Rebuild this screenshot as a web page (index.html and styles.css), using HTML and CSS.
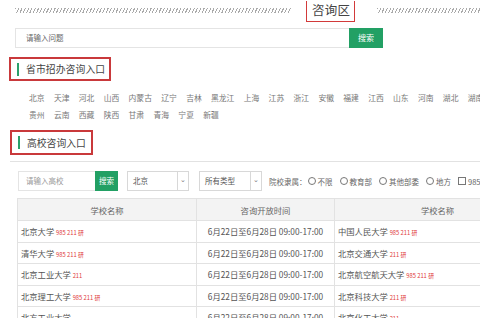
FILE: index.html
```html
<!DOCTYPE html>
<html lang="zh">
<head>
<meta charset="utf-8">
<link rel="stylesheet" href="styles.css">
</head>
<body>
<div class="page">
  <div class="top">
    <div class="hatch hatch-left"></div>
    <div class="title">咨询区</div>
    <div class="hatch hatch-right"></div>
  </div>
  <div class="search">
    <div class="search-input">请输入问题</div>
    <div class="btn">搜索</div>
  </div>

  <div class="sec sec-1"><span class="bar"></span>省市招办咨询入口</div>
  <div class="prov">
    <div class="prov-row"><span>北京</span><span>天津</span><span>河北</span><span>山西</span><span>内蒙古</span><span>辽宁</span><span>吉林</span><span>黑龙江</span><span>上海</span><span>江苏</span><span>浙江</span><span>安徽</span><span>福建</span><span>江西</span><span>山东</span><span>河南</span><span>湖北</span><span>湖南</span></div>
    <div class="prov-row"><span>贵州</span><span>云南</span><span>西藏</span><span>陕西</span><span>甘肃</span><span>青海</span><span>宁夏</span><span>新疆</span></div>
  </div>

  <div class="sec sec-2"><span class="bar"></span>高校咨询入口</div>
  <div class="rule"></div>

  <div class="filter">
    <div class="f-input">请输入高校</div>
    <div class="btn btn-sm">搜索</div>
    <div class="sel sel-1"><span class="sel-text">北京</span><span class="sel-arrow">⌄</span></div>
    <div class="sel sel-2"><span class="sel-text">所有类型</span><span class="sel-arrow">⌄</span></div>
    <div class="belong">院校隶属：</div>
    <div class="opt"><span class="radio"></span>不限</div>
    <div class="opt"><span class="radio"></span>教育部</div>
    <div class="opt"><span class="radio"></span>其他部委</div>
    <div class="opt"><span class="radio"></span>地方</div>
    <div class="opt"><span class="check"></span>985</div>
  </div>

  <table class="tbl">
    <thead>
      <tr><th class="c1">学校名称</th><th class="c2">咨询开放时间</th><th class="c3">学校名称</th></tr>
    </thead>
    <tbody>
      <tr><td>北京大学 <span class="tag">985 211 研</span></td><td class="time">6月22日至6月28日 09:00-17:00</td><td>中国人民大学 <span class="tag">985 211 研</span></td></tr>
      <tr><td>清华大学 <span class="tag">985 211 研</span></td><td class="time">6月22日至6月28日 09:00-17:00</td><td>北京交通大学 <span class="tag">211 研</span></td></tr>
      <tr><td>北京工业大学 <span class="tag">211</span></td><td class="time">6月22日至6月28日 09:00-17:00</td><td>北京航空航天大学 <span class="tag">985 211 研</span></td></tr>
      <tr><td>北京理工大学 <span class="tag">985 211 研</span></td><td class="time">6月22日至6月28日 09:00-17:00</td><td>北京科技大学 <span class="tag">211 研</span></td></tr>
      <tr><td>北方工业大学</td><td class="time">6月22日至6月28日 09:00-17:00</td><td>北京化工大学 <span class="tag">211</span></td></tr>
    </tbody>
  </table>
</div>
</body>
</html>
```

FILE: styles.css
```css
html, body {
  margin: 0;
  padding: 0;
  background: #fff;
  overflow: hidden;
}
body {
  width: 480px;
  height: 318px;
  font-family: "Noto Sans CJK SC", "Noto Sans", sans-serif;
  color: #555;
}
.page {
  width: 480px;
}
.top {
  display: flex;
  align-items: center;
  height: 22px;
}
.hatch {
  height: 5px;
  background: repeating-linear-gradient(115deg, #aaa 0 1px, #fff 1px 3px);
  margin-top: -2px;
}
.hatch-left {
  margin-left: 15px;
  width: 276px;
}
.hatch-right {
  margin-left: 22px;
  flex: 1;
}
.title {
  margin-left: 15px;
  height: 20px;
  border: 1px solid #d23a3a;
  border-top: none;
  padding: 0 4px 0 5px;
  font-size: 12.5px;
  line-height: 18px;
  color: #444;
  letter-spacing: 0.3px;
}
.search {
  display: flex;
  margin: 6px 0 0 15px;
}
.search-input {
  width: 323px;
  height: 18px;
  border: 1px solid #e4e4e4;
  border-right: none;
  padding-left: 10px;
  font-size: 7.5px;
  line-height: 18px;
  color: #666;
}
.btn {
  width: 34px;
  height: 20px;
  background: #22a064;
  color: #fff;
  font-size: 8px;
  line-height: 20px;
  text-align: center;
  flex-shrink: 0;
}
.sec {
  display: flex;
  align-items: center;
  border: 2px solid #c9393b;
  font-size: 9.8px;
  color: #444;
  box-sizing: border-box;
}
.bar {
  width: 2px;
  height: 13px;
  background: #2aa06a;
  margin: 0 7px 0 6px;
}
.sec-1 {
  margin: 9px 0 0 9px;
  width: 102px;
  height: 24px;
  letter-spacing: 0.1px;
}
.prov {
  margin: 8px 0 0 29px;
  font-size: 7.8px;
  color: #777;
}
.prov-row {
  white-space: nowrap;
  height: 17px;
  line-height: 17px;
}
.prov-row span {
  margin-right: 9.3px;
}
.sec-2 {
  margin: 7px 0 0 10px;
  width: 83px;
  height: 25px;
}
.rule {
  margin: 6px 0 0 10px;
  height: 1px;
  background: #e2e2e2;
}
.filter {
  display: flex;
  align-items: center;
  margin: 9px 0 0 18px;
  height: 20px;
  white-space: nowrap;
  font-size: 7.5px;
}
.filter > * {
  flex-shrink: 0;
}
.f-input {
  width: 69px;
  height: 18px;
  border: 1px solid #e4e4e4;
  border-right: none;
  padding-left: 7px;
  line-height: 18px;
  color: #999;
}
.btn-sm {
  width: 23px;
  height: 20px;
  line-height: 20px;
  font-size: 7.5px;
}
.sel {
  display: flex;
  height: 18px;
  border: 1px solid #d8d8d8;
  color: #555;
  line-height: 18px;
}
.sel-1 {
  margin-left: 9px;
  width: 60px;
}
.sel-2 {
  margin-left: 10px;
  width: 61px;
}
.sel-text {
  flex: 1;
  padding-left: 5px;
}
.sel-arrow {
  width: 10px;
  border-left: 1px solid #d8d8d8;
  text-align: center;
  font-size: 7px;
  line-height: 14px;
  color: #777;
}
.belong {
  margin-left: 7px;
  color: #666;
}
.opt {
  display: flex;
  align-items: center;
  margin-left: 1px;
  color: #666;
}
.opt + .opt {
  margin-left: 7px;
}
.radio {
  width: 6px;
  height: 6px;
  border: 1px solid #777;
  border-radius: 50%;
  margin-right: 2px;
}
.check {
  width: 6px;
  height: 6px;
  border: 1px solid #777;
  margin-right: 2px;
}
.tbl {
  margin: 7px 0 0 17px;
  border-collapse: collapse;
  table-layout: fixed;
  width: 520px;
  font-size: 8.3px;
  color: #555;
}
.tbl th, .tbl td {
  border: 1px solid #e2e2e2;
  height: 20.5px;
  padding: 0 0 0 3px;
  white-space: nowrap;
  overflow: hidden;
}
.tbl th {
  background: #f3f3f3;
  font-weight: normal;
  text-align: center;
  height: 21px;
  color: #666;
  padding: 0;
}
.c1 { width: 178px; }
.c2 { width: 137px; }
.c3 { width: 205px; }
.tbl td.time {
  text-align: center;
  padding: 0;
}
.tag {
  color: #e03b3b;
  font-size: 5.8px;
}
```
